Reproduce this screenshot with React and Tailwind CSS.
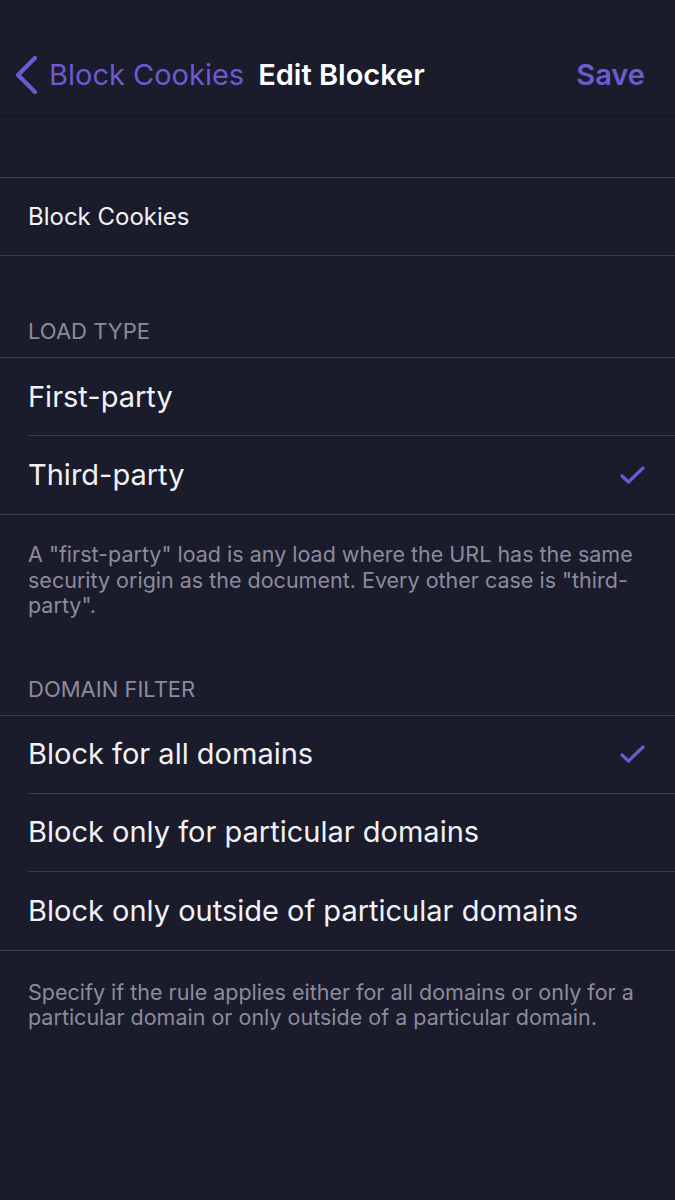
import React from "react";

const purple = "text-[#6b5bd2]";

const Check = () => (
  <svg width="26" height="20" viewBox="0 0 26 20" fill="none" className="shrink-0">
    <path d="M2 11 L8.5 17 L23 3" stroke="#6b5bd2" strokeWidth="3.2" strokeLinecap="round" strokeLinejoin="round" />
  </svg>
);

const Row = ({ label, checked, last }) => (
  <div className="pl-7">
    <div className={`h-[78px] flex items-center justify-between pr-[29px] ${last ? "" : "border-b border-[#3a3b4b]"}`}>
      <span className="text-[29px] text-[#f2f2f6]">{label}</span>
      {checked ? <Check /> : null}
    </div>
  </div>
);

const Group = ({ rows }) => (
  <div className="border-y border-[#3a3b4b]">
    {rows.map((r, i) => (
      <Row key={r.label} label={r.label} checked={r.checked} last={i === rows.length - 1} />
    ))}
  </div>
);

const Header = ({ children, h }) => (
  <div className={`${h} flex items-end pl-7 pb-[12px]`}>
    <span className="text-[22px] leading-[28px] text-[#8b8b9c]">{children}</span>
  </div>
);

export default function App() {
  return (
    <div className="w-[675px] h-[1200px] bg-[#1b1c2b] overflow-hidden" style={{ fontFamily: "Inter, 'Noto Sans', sans-serif" }}>
      {/* nav bar */}
      <div className="h-[116px] pt-[34px] flex items-center border-b border-[#141520]">
        <div className="flex items-center pl-[14px] w-full">
          <svg width="26" height="38" viewBox="0 0 26 38" fill="none" className="shrink-0">
            <path d="M21 2 L4 19 L21 36" stroke="#6b5bd2" strokeWidth="4.2" strokeLinecap="round" strokeLinejoin="round" />
          </svg>
          <span className={`ml-[9px] text-[29px] ${purple}`}>Block Cookies</span>
          <span className="ml-[14px] text-[29px] font-semibold text-white">Edit Blocker</span>
          <span className={`ml-auto mr-[30px] text-[29px] font-semibold ${purple}`}>Save</span>
        </div>
      </div>

      <div className="h-[61px]" />

      {/* name */}
      <div className="border-y border-[#3a3b4b] h-[79px] flex items-center pl-7">
        <span className="text-[24px] text-[#f2f2f6]">Block Cookies</span>
      </div>

      {/* load type */}
      <Header h="h-[101px]">LOAD TYPE</Header>
      <Group rows={[{ label: "First-party" }, { label: "Third-party", checked: true }]} />
      <div className="px-7 pt-[27px] text-[21.5px] leading-[25.5px] text-[#8b8b9c]">
        A "first-party" load is any load where the URL has the same security origin as the document. Every other case is "third-party".
      </div>

      <Header h="h-[96px]">DOMAIN FILTER</Header>
      <Group
        rows={[
          { label: "Block for all domains", checked: true },
          { label: "Block only for particular domains" },
          { label: "Block only outside of particular domains" },
        ]}
      />
      <div className="px-7 pt-[29px] text-[21.5px] leading-[25.5px] text-[#8b8b9c]">
        Specify if the rule applies either for all domains or only for a particular domain or only outside of a particular domain.
      </div>
    </div>
  );
}
